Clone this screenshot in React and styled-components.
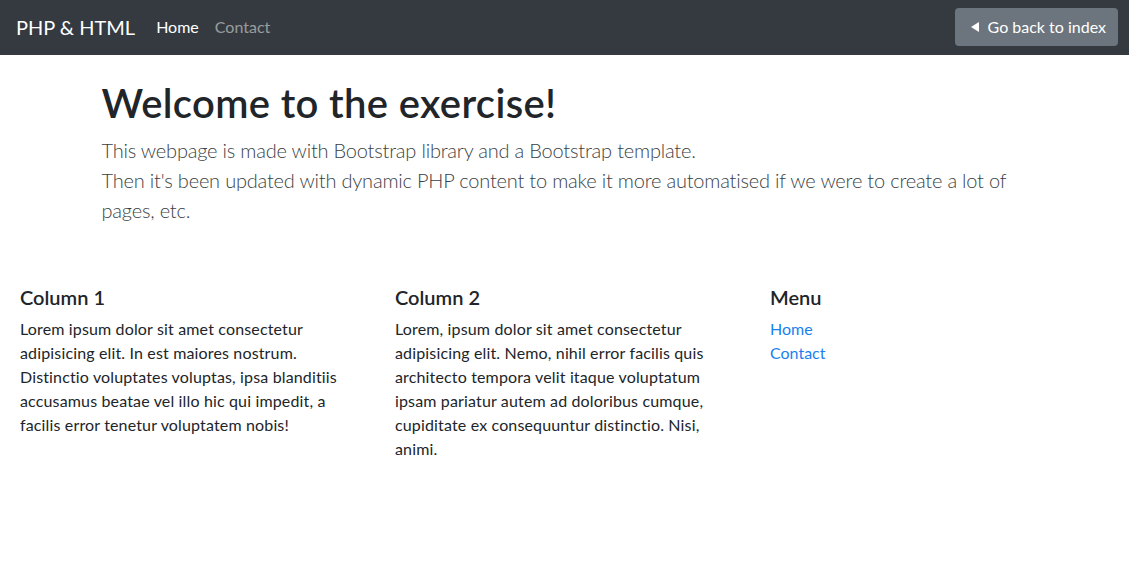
import React from "react";
import styled, { createGlobalStyle } from "styled-components";

const Global = createGlobalStyle`
  html, body { margin: 0; padding: 0; background: #fff; }
  body {
    font-family: Lato, "Open Sans", "Liberation Sans", sans-serif;
    font-size: 16px;
    line-height: 1.5;
    color: #212529;
  }
  * { box-sizing: border-box; }
`;

const Navbar = styled.nav`
  height: 55px;
  background: #343a40;
  display: flex;
  align-items: center;
  justify-content: space-between;
  padding: 0 11px 1px 16px;
`;

const Left = styled.div`
  display: flex;
  align-items: center;
`;

const Brand = styled.a`
  font-size: 20px;
  line-height: 30px;
  color: #fff;
  margin-right: 13px;
  text-decoration: none;
`;

const NavLink = styled.a`
  padding: 8px;
  font-size: 16px;
  color: ${(p) => (p.$active ? "#fff" : "rgba(255,255,255,0.5)")};
  text-decoration: none;
`;

const BackButton = styled.a`
  display: flex;
  align-items: center;
  gap: 9px;
  height: 38px;
  padding: 0 12px 0 16px;
  background: #6c757d;
  border-radius: 4px;
  color: #fff;
  font-size: 16px;
  text-decoration: none;
`;

const Hero = styled.header`
  max-width: 960px;
  margin: 0 auto;
  padding: 24px 15px 0 17px;
`;

const Title = styled.h1`
  margin: 0 0 8px;
  font-size: 40px;
  font-weight: 600;
  line-height: 1.2;
  letter-spacing: 0.35px;
  color: #212529;
`;

const Lead = styled.p`
  margin: 0;
  font-size: 20px;
  font-weight: 300;
  line-height: 30px;
  letter-spacing: -0.2px;
  color: #3a3f45;
`;

const Row = styled.section`
  display: grid;
  grid-template-columns: repeat(3, 375px);
  padding: 60px 0 0 5px;
`;

const Col = styled.div`
  padding: 0 15px;
`;

const ColTitle = styled.h5`
  margin: 0 0 8px;
  font-size: 20px;
  font-weight: 600;
  line-height: 24px;
`;

const Text = styled.p`
  margin: 0;
  letter-spacing: 0.15px;
`;

const MenuList = styled.ul`
  list-style: none;
  margin: 0;
  padding: 0;
`;

const MenuLink = styled.a`
  color: #1a7ff0;
  text-decoration: none;
`;

const Triangle = () => (
  <svg width="8" height="10" viewBox="0 0 8 10">
    <path d="M0 5 L8 0 L8 10 Z" fill="#fff" />
  </svg>
);

export default function App() {
  return (
    <>
      <Global />
      <Navbar>
        <Left>
          <Brand href="#">PHP &amp; HTML</Brand>
          <NavLink href="#" $active>Home</NavLink>
          <NavLink href="#">Contact</NavLink>
        </Left>
        <BackButton href="#">
          <Triangle />
          Go back to index
        </BackButton>
      </Navbar>
      <Hero>
        <Title>Welcome to the exercise!</Title>
        <Lead>
          This webpage is made with Bootstrap library and a Bootstrap template.
          <br />
          Then it's been updated with dynamic PHP content to make it more automatised if we were to create a lot of pages, etc.
        </Lead>
      </Hero>
      <Row>
        <Col>
          <ColTitle>Column 1</ColTitle>
          <Text>
            Lorem ipsum dolor sit amet consectetur adipisicing elit. In est maiores nostrum. Distinctio voluptates voluptas, ipsa blanditiis accusamus beatae vel illo hic qui impedit, a facilis error tenetur voluptatem nobis!
          </Text>
        </Col>
        <Col>
          <ColTitle>Column 2</ColTitle>
          <Text>
            Lorem, ipsum dolor sit amet consectetur adipisicing elit. Nemo, nihil error facilis quis architecto tempora velit itaque voluptatum ipsam pariatur autem ad doloribus cumque, cupiditate ex consequuntur distinctio. Nisi, animi.
          </Text>
        </Col>
        <Col>
          <ColTitle>Menu</ColTitle>
          <MenuList>
            <li><MenuLink href="#">Home</MenuLink></li>
            <li><MenuLink href="#">Contact</MenuLink></li>
          </MenuList>
        </Col>
      </Row>
    </>
  );
}
